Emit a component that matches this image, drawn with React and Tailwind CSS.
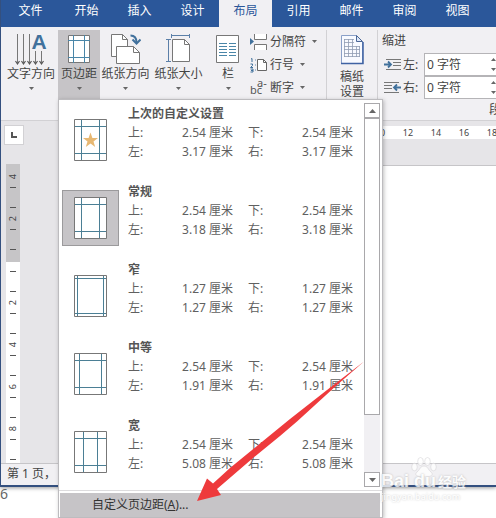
const tabs = ["开始", "插入", "设计", "布局", "引用", "邮件", "审阅", "视图"];

const presets = [
  { name: "上次的自定义设置", top: "2.54", bottom: "2.54", left: "3.17", right: "3.17", x: 7, y: 7, star: true },
  { name: "常规", top: "2.54", bottom: "2.54", left: "3.18", right: "3.18", x: 7, y: 7, selected: true },
  { name: "窄", top: "1.27", bottom: "1.27", left: "1.27", right: "1.27", x: 3, y: 3 },
  { name: "中等", top: "2.54", bottom: "2.54", left: "1.91", right: "1.91", x: 5, y: 7 },
  { name: "宽", top: "2.54", bottom: "2.54", left: "5.08", right: "5.08", x: 9, y: 7 },
];

const Caret = () => (
  <svg width="5" height="3" viewBox="0 0 5 3" className="shrink-0">
    <path d="M0 0h5L2.5 3z" fill="#666" />
  </svg>
);

const TextDirectionIcon = () => (
  <svg width="32" height="32" viewBox="0 0 32 32" fill="none" className="overflow-visible">
    <path d="M2.500 0v30M8.500 0v30M14.500 0v30M20.500 17v13M26.500 17v13" stroke="#777" />
    <path
      d="M.5 27l2 3 2-3M6.500 27l2 3 2-3M12.500 27l2 3 2-3M18.500 27l2 3 2-3M24.500 27l2 3 2-3"
      stroke="#555"
      strokeWidth="1.200"
    />
    <text x="24" y="15" textAnchor="middle" fill="#41719c" className="font-['Liberation_Sans'] text-[21px] font-bold">
      A
    </text>
  </svg>
);

const MarginsIcon = () => (
  <svg width="24" height="30" viewBox="0 0 24 30" fill="none">
    <path d="M1.500 1.500h21v27h-21z" fill="#fff" stroke="#777" />
    <path d="M6.500 1v28M17.500 1v28M1 6.500h22M1 23.500h22" stroke="#4a86a8" />
  </svg>
);

const OrientationIcon = () => (
  <svg width="31" height="32" viewBox="0 0 31 32" fill="none">
    <path d="M1.500 .5h11l5 5v17h-16z" fill="#fff" stroke="#777" />
    <path d="M12.500 .5v5h5" stroke="#777" />
    <path d="M6.500 12.500h17l6 6v11h-23z" fill="#fff" stroke="#777" />
    <path d="M23.500 12.500v6h6" stroke="#777" />
    <path d="M20.500 1.500c4 0 6 2 6 7" stroke="#41719c" strokeWidth="2" />
    <path d="M22.500 5.500l4 4 4-4" stroke="#41719c" strokeWidth="2" />
  </svg>
);

const SizeIcon = () => (
  <svg width="25" height="30" viewBox="0 0 25 30" fill="none">
    <path d="M6.500 5.500h12l5 5v17h-17z" fill="#fff" stroke="#777" />
    <path d="M18.500 5.500v5h5" stroke="#777" />
    <path d="M5 1.500h19M5.500 0v4M23.500 0v4M2.500 6v22M0 5.500h5M0 27.500h5" stroke="#5b7fa8" />
  </svg>
);

const ColumnsIcon = () => (
  <svg width="24" height="30" viewBox="0 0 24 30" fill="none">
    <path d="M.5 1.500h22v27h-22z" fill="#fff" stroke="#777" />
    <path
      d="M3 9.500h8M13 9.500h7M3 12.500h8M13 12.500h7M3 15.500h8M13 15.500h7M3 18.500h8M13 18.500h7M3 21.500h8M13 21.500h7"
      stroke="#4a86a8"
    />
  </svg>
);

const BreaksIcon = () => (
  <svg width="18" height="18" viewBox="0 0 18 18" fill="none">
    <path d="M4.500 1v5.500h12V1M4.500 17v-5.500h12V17" fill="#fff" stroke="#777" />
    <path d="M0 5l4 3.500L0 12z" fill="#41719c" />
  </svg>
);

const LineNumbersIcon = () => (
  <svg width="18" height="16" viewBox="0 0 18 16" fill="none">
    <path d="M7.500 2.500h6l3 3v8h-9z" fill="#fff" stroke="#666" />
    <path d="M13.500 2.500v3h3" stroke="#666" />
    <path
      d="M1 2l1-.5V5M.5 7h2v1.500l-2 2h2.500M.5 12h2.500v3H.5M1 13.500h2M5 3h.8M5 8h.8M5 13h.8"
      stroke="#41719c"
    />
  </svg>
);

const HyphenationIcon = () => (
  <svg width="18" height="18" viewBox="0 0 18 18" fill="#555" className="overflow-visible text-[11px]">
    <text x="0" y="15">bc</text>
    <text x="7" y="8">a-</text>
  </svg>
);

const GridPaperIcon = () => (
  <svg width="24" height="31" viewBox="0 0 24 31" fill="none">
    <path d="M1.500 1.500h15l6 6v22h-21z" fill="#f8faff" stroke="#8aa0c8" />
    <path d="M1 29.500h22V8" stroke="#3f62a3" strokeWidth="1.500" />
    <path d="M16.500 1.500v6h6z" fill="#dce6f7" stroke="#4b6796" />
    <path
      d="M4 5.500h10M4 8.500h10M4 12.500h16M4 15.500h16M4 19.500h16M4 22.500h16M4.500 5v18M8.500 5v18M12.500 5v18M16.500 12v11M19.500 12v11"
      stroke="#8f9cb3"
      strokeWidth=".8"
    />
  </svg>
);

const IndentIcon = ({ right }) => (
  <svg width="17" height="13" viewBox="0 0 17 13" fill="none" className="shrink-0">
    {right ? (
      <>
        <path d="M0 1.500h15M0 4.500h8M0 7.500h8M0 11.500h15" stroke="#777" />
        <path d="M17 6.500h-6M13 3.500l-3 3 3 3" stroke="#41719c" strokeWidth="1.800" />
      </>
    ) : (
      <>
        <path d="M2 1.500h15M9 4.500h8M9 7.500h8M2 11.500h15" stroke="#777" />
        <path d="M0 6.500h6M4 3.500l3 3-3 3" stroke="#41719c" strokeWidth="1.800" />
      </>
    )}
  </svg>
);

const PresetIcon = ({ x, y, star }) => (
  <svg width="33" height="42" viewBox="0 0 33 42" fill="none">
    <path d="M.5.5h32v41H.5z" fill="#fff" />
    <path
      d={`M${x + 0.5} 0v42M${32.5 - x} 0v42M0 ${y + 0.5}h33M0 ${41.5 - y}h33`}
      stroke="#4b7f95"
    />
    <path d="M.5.5h32v41H.5z" stroke="#777" />
    {star && (
      <path
        d="M16.500 13.500l1.900 5.400h5.600l-4.500 3.500 1.700 5.600-4.700-3.400-4.700 3.400 1.700-5.600-4.500-3.500h5.600z"
        fill="#e7b873"
      />
    )}
  </svg>
);

const BigButton = ({ icon, label, className }) => (
  <button className={`flex h-[69px] shrink-0 flex-col items-center pt-1 ${className}`}>
    <span className="flex h-8 items-start justify-center">{icon}</span>
    <span className="leading-4 whitespace-nowrap">{label}</span>
    <span className="flex h-3 items-center">
      <Caret />
    </span>
  </button>
);

const SmallButton = ({ icon, label }) => (
  <button className="flex h-[23px] items-center gap-[2px] whitespace-nowrap">
    <span className="flex w-[18px] items-center">{icon}</span>
    <span className="mr-1">{label}</span>
    <Caret />
  </button>
);

const IndentField = ({ id, label, right }) => (
  <div className="flex h-[23px] items-center">
    <IndentIcon right={right} />
    <label htmlFor={id} className="w-[23px] pl-[2px]">
      {label}
    </label>
    <div className="flex h-[23px] w-[77px] items-center border border-[#b5b4b7] bg-white">
      <input id={id} defaultValue="0 字符" className="w-[66px] bg-transparent pl-[2px] outline-none" />
      <div className="flex flex-col gap-[7px]">
        <button aria-label="增加" className="rotate-180 leading-none">
          <Caret />
        </button>
        <button aria-label="减少" className="leading-none">
          <Caret />
        </button>
      </div>
    </div>
  </div>
);

const Preset = ({ preset }) => (
  <button role="menuitem" className="flex h-[78px] w-full items-start pl-[3px] text-left">
    <span
      className={`mt-3 flex h-14 w-[57px] shrink-0 items-center justify-center border ${
        preset.selected ? "border-[#9b9a9c] bg-[#c6c4c7]" : "border-transparent"
      }`}
    >
      <PresetIcon x={preset.x} y={preset.y} star={preset.star} />
    </span>
    <span className="ml-[9px] grid grid-cols-[36px_69px_15px_36px_69px] pt-1 leading-[19px] text-[#606060]">
      <span className="col-span-5 font-bold text-[#555]">{preset.name}</span>
      <span>上:</span>
      <span className="text-right">{preset.top} 厘米</span>
      <span className="col-start-4">下:</span>
      <span className="text-right">{preset.bottom} 厘米</span>
      <span>左:</span>
      <span className="text-right">{preset.left} 厘米</span>
      <span className="col-start-4">右:</span>
      <span className="text-right">{preset.right} 厘米</span>
    </span>
  </button>
);

const MarginsMenu = () => (
  <div
    role="menu"
    className="absolute top-full left-0 z-10 w-[325px] border border-[#bdbcbf] bg-white shadow-[1px_1px_4px_rgba(0,0,0,0.25)]"
  >
    <div className="flex">
      <div className="flex-1">
        {presets.map((preset) => (
          <Preset key={preset.name} preset={preset} />
        ))}
      </div>
      <div className="my-[3px] mr-[2px] flex w-4 flex-col bg-[#f1f0f3]">
        <button
          aria-label="向上滚动"
          className="flex h-[15px] items-center justify-center border border-[#a9a8ab] bg-white"
        >
          <svg width="7" height="4" viewBox="0 0 7 4">
            <path d="M0 4h7L3.500 0z" fill="#666" />
          </svg>
        </button>
        <div className="h-[297px] border border-[#a9a8ab] bg-white" />
        <button
          aria-label="向下滚动"
          className="mt-auto flex h-[15px] items-center justify-center border border-[#a9a8ab] bg-white"
        >
          <svg width="7" height="4" viewBox="0 0 7 4">
            <path d="M0 0h7L3.500 4z" fill="#666" />
          </svg>
        </button>
      </div>
    </div>
    <div className="border-t border-[#dddcde] pt-[2px] pr-[2px] pl-px">
      <button
        role="menuitem"
        className="h-6 w-full bg-[#c6c4c7] pl-8 text-left whitespace-nowrap text-[#333]"
      >
        自定义页边距(<u>A</u>)...
      </button>
    </div>
  </div>
);

const RulerLabel = ({ children }) => (
  <div className="flex h-[21px] w-[14px] items-center justify-center text-[9px]">
    <span className="-rotate-90">{children}</span>
  </div>
);

const RulerGap = () => <div className="mx-auto h-[21px] w-[6px] border-y border-[#555]" />;

const Watermark = () => (
  <div className="pointer-events-none absolute right-[30px] bottom-[14px] z-20 w-[85px] text-white opacity-80">
    <svg width="26" height="20" viewBox="0 0 26 20" className="mx-auto -mb-1 block" fill="#fff" stroke="#d5d4d7" strokeWidth=".7">
      <ellipse cx="3.500" cy="10" rx="2.800" ry="3.800" />
      <ellipse cx="9.500" cy="4.500" rx="2.800" ry="4" />
      <ellipse cx="16.500" cy="4.500" rx="2.800" ry="4" />
      <ellipse cx="22.500" cy="10" rx="2.800" ry="3.800" />
      <path d="M13 9c4 0 4 4 7 6 3 3 0 5-7 5s-10-2-7-5c3-2 3-6 7-6z" />
    </svg>
    <div className="flex items-baseline justify-between whitespace-nowrap font-bold [text-shadow:0_0_2px_#aaa]">
      <span className="font-['Liberation_Sans'] text-[18px] leading-4">Bai du</span>
      <span className="text-[14px] leading-4">经验</span>
    </div>
    <div className="text-[9px] leading-[14px] font-medium whitespace-nowrap [text-shadow:0_0_2px_#bbb]">
      jingyan.baidu.com
    </div>
  </div>
);

const Arrow = () => (
  <svg
    width="170"
    height="142"
    viewBox="0 0 170 142"
    className="pointer-events-none absolute top-[360px] left-[196px] z-20"
  >
    <path
      d="M1 141L11 118.500L17 123.500L34 108L64 83.500L94 59L131 30L168 1.500L141 25L101 61.500L84 76L57 98L21 129L25 135Z"
      fill="#ee3a3c"
    />
  </svg>
);

const App = () => {
  return (
    <div className="relative flex min-h-screen flex-col overflow-hidden bg-white font-['Noto_Sans','Noto_Sans_CJK_SC',sans-serif] text-[12px] text-[#444]">
      <div className="flex flex-1 flex-col border-b-2 border-l border-[#34507f] bg-[#e6e5e8] shadow-[0_1px_4px_rgba(0,0,0,0.4)]">
        <nav className="flex h-[27px] bg-[#2b579a] text-white">
          <a href="#file" className="flex w-[59px] shrink-0 items-center justify-center pb-[6px]">
            文件
          </a>
          {tabs.map((tab) => (
            <a
              key={tab}
              href={`#${tab}`}
              className={`flex w-[53px] shrink-0 items-center justify-center pb-[6px] ${
                tab === "布局" ? "bg-[#f1f0f3] text-[#2b579a]" : ""
              }`}
            >
              {tab}
            </a>
          ))}
        </nav>

        <div className="flex h-[94px] items-start border-b border-[#d2d1d4] bg-[#f1f0f3] pt-[3px]">
          <BigButton icon={<TextDirectionIcon />} label="文字方向" className="mr-px ml-1 w-[52px]" />
          <div className="relative shrink-0">
            <BigButton icon={<MarginsIcon />} label="页边距" className="w-[42px] bg-[#c6c4c7]" />
            <MarginsMenu />
          </div>
          <BigButton icon={<OrientationIcon />} label="纸张方向" className="w-[51px]" />
          <BigButton icon={<SizeIcon />} label="纸张大小" className="w-[55px]" />
          <BigButton icon={<ColumnsIcon />} label="栏" className="w-11" />
          <div className="shrink-0">
            <SmallButton icon={<BreaksIcon />} label="分隔符" />
            <SmallButton icon={<LineNumbersIcon />} label="行号" />
            <SmallButton icon={<HyphenationIcon />} label="断字" />
          </div>
          <div className="ml-[9px] flex h-[69px] w-[52px] shrink-0 flex-col items-center border-x border-[#d2d1d4] pt-1">
            <button className="flex flex-col items-center leading-[15px]">
              <GridPaperIcon />
              <span className="pt-1">稿纸</span>
              <span>设置</span>
            </button>
          </div>
          <div className="w-[124px] shrink-0 pl-1">
            <div className="h-[23px] leading-[22px]">缩进</div>
            <div className="pl-[2px]">
              <IndentField id="indent-left" label="左:" />
              <IndentField id="indent-right" label="右:" right />
            </div>
            <div className="pt-[2px] pl-[107px] leading-[18px] whitespace-nowrap">段落</div>
          </div>
        </div>

        <div className="flex flex-1">
          <div className="flex w-[57px] shrink-0 flex-col">
            <div className="flex h-[43px] items-start pt-1 pl-[3px]">
              <button
                aria-label="制表符"
                className="flex h-5 w-5 items-center justify-center border border-[#d2d1d4] bg-white"
              >
                <svg width="6" height="6" viewBox="0 0 6 6" fill="none">
                  <path d="M1 0v5h5" stroke="#555" strokeWidth="2" />
                </svg>
              </button>
            </div>
            <div className="ml-[5px] flex w-[14px] flex-1 flex-col">
              <div className="h-[98px] overflow-hidden bg-[#c6c5c7] pt-[2px]">
                <RulerLabel>4</RulerLabel>
                <RulerGap />
                <RulerLabel>2</RulerLabel>
                <RulerGap />
              </div>
              <div className="flex-1 bg-white pt-[9px]">
                <RulerGap />
                <RulerLabel>2</RulerLabel>
                <RulerGap />
                <RulerLabel>4</RulerLabel>
                <RulerGap />
                <RulerLabel>6</RulerLabel>
                <RulerGap />
                <RulerLabel>8</RulerLabel>
                <RulerGap />
              </div>
            </div>
          </div>
          <div className="flex min-w-0 flex-1 flex-col overflow-hidden pt-[5px]">
            <div className="flex h-[13px] items-center bg-white pl-[308px] text-[9px]">
              {[10, 12, 14, 16, 18].map((n) => (
                <span key={n} className="w-7 shrink-0 text-center">
                  {n}
                </span>
              ))}
            </div>
            <div className="mt-[26px] flex-1 border-t border-[#c6c5c8] bg-white" />
          </div>
        </div>

        <footer className="h-[22px] border-t border-[#c6c5c8] bg-[#f1f0f3] pl-[6px] leading-[20px]">
          第 1 页，
        </footer>
      </div>
      <div className="h-[31px] text-[14px] leading-[14px] text-[#666]">6</div>

      <Arrow />
      <Watermark />
    </div>
  );
};

export default App;
